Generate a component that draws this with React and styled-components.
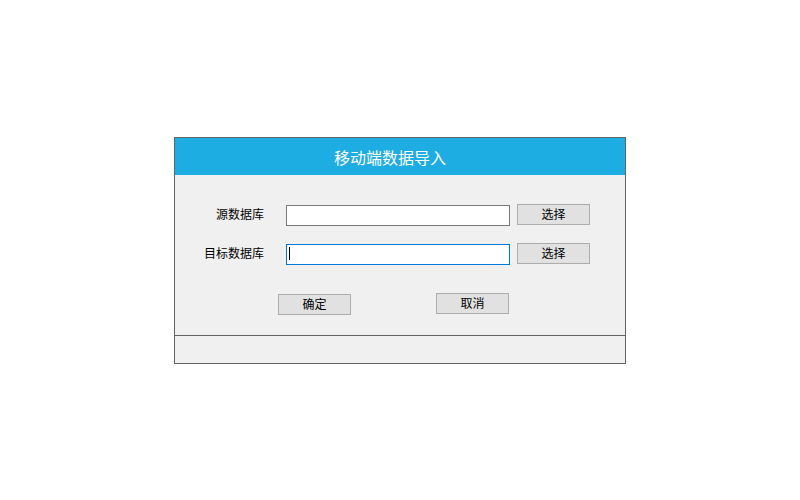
import React from 'react';
import styled, { createGlobalStyle } from 'styled-components';

const GlobalStyle = createGlobalStyle`
    html, body {
        margin: 0;
        padding: 0;
        background: #ffffff;
        font-family: "Noto Sans CJK SC", "Noto Sans", sans-serif;
    }
`;

const Page = styled.div`
    display: flex;
    justify-content: center;
    align-items: flex-start;
    padding-top: 137px;
    height: 500px;
    box-sizing: border-box;
`;

const Dialog = styled.div`
    width: 452px;
    border: 1px solid #646464;
    box-sizing: border-box;
    background: #f0f0f0;
    display: flex;
    flex-direction: column;
`;

const Header = styled.div`
    height: 37px;
    background: #1eade3;
    color: #ffffff;
    font-size: 16px;
    display: flex;
    align-items: center;
    justify-content: center;
    padding-right: 20px;
`;

const Body = styled.div`
    padding: 29px 0 20px 0;
    display: flex;
    flex-direction: column;
    gap: 17px;
`;

const Row = styled.div`
    display: grid;
    grid-template-columns: 104px 224px 73px;
    column-gap: 7px;
    align-items: start;
`;

const Label = styled.label`
    font-size: 12px;
    color: #000000;
    text-align: right;
    padding-right: 15px;
    line-height: 19px;
`;

const FieldWrap = styled.div`
    position: relative;
    margin-top: 1px;
`;

const TextBox = styled.input`
    display: block;
    width: 224px;
    height: 21px;
    box-sizing: border-box;
    border: 1px solid ${(p) => (p.$focused ? '#0078d7' : '#7a7a7a')};
    background: #ffffff;
    outline: none;
    padding: 0 3px;
    margin: 0;
    font-size: 12px;
`;

const Caret = styled.span`
    position: absolute;
    left: 3px;
    top: 3px;
    width: 1px;
    height: 13px;
    background: #000000;
`;

const Button = styled.button`
    width: 73px;
    height: 21px;
    box-sizing: border-box;
    border: 1px solid #adadad;
    background: #e1e1e1;
    color: #000000;
    font-family: "Noto Sans CJK SC", "Noto Sans", sans-serif;
    font-size: 12px;
    padding: 0 0 2px 0;
    margin: 0;
    line-height: 17px;
    margin-top: ${(p) => p.$drop || 0}px;
`;

const Actions = styled.div`
    display: flex;
    align-items: flex-start;
    padding-left: 103px;
    gap: 85px;
    margin-top: 11px;
`;

const StatusBar = styled.div`
    height: 27px;
    border-top: 1px solid #646464;
    background: #f0f0f0;
`;

const DbRow = ({ label, focused }) => (
    <Row>
        <Label>{label}</Label>
        <FieldWrap>
            <TextBox readOnly $focused={focused} />
            {focused && <Caret />}
        </FieldWrap>
        <Button>选择</Button>
    </Row>
);

const App = () => (
    <>
        <GlobalStyle />
        <Page>
            <Dialog>
                <Header>移动端数据导入</Header>
                <Body>
                    <DbRow label="源数据库" />
                    <DbRow label="目标数据库" focused />
                    <Actions>
                        <Button $drop={1}>确定</Button>
                        <Button>取消</Button>
                    </Actions>
                </Body>
                <StatusBar />
            </Dialog>
        </Page>
    </>
);

export default App;
